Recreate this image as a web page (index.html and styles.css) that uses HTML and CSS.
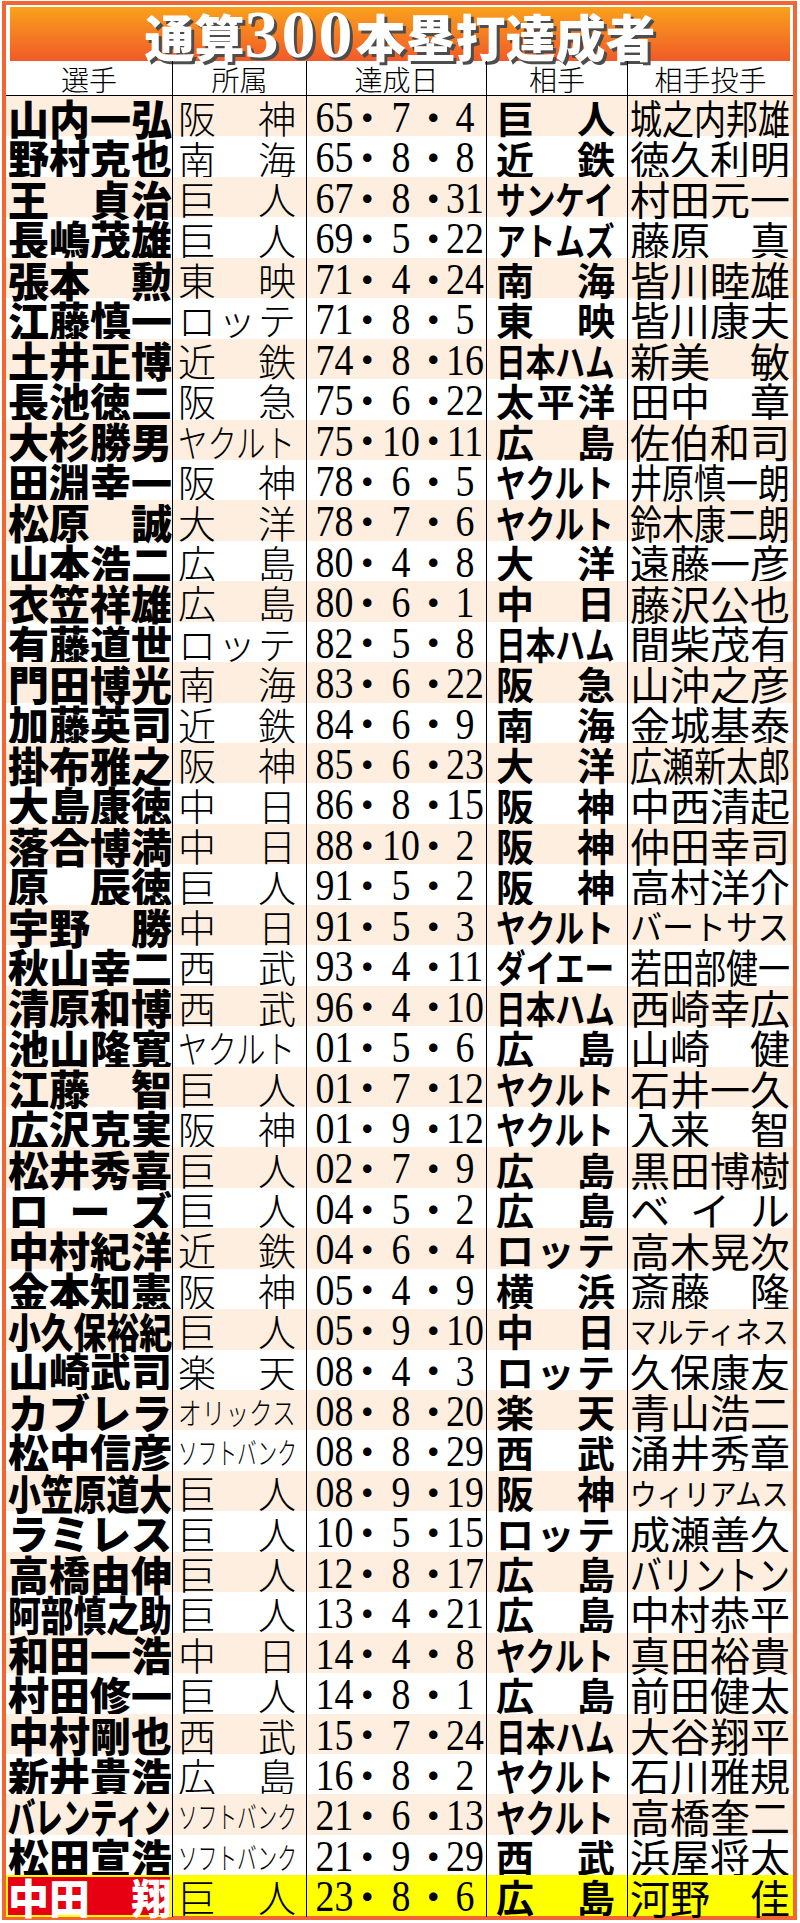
FILE: index.html
```html
<!DOCTYPE html>
<html lang="ja">
<head>
<meta charset="utf-8">
<title>通算300本塁打達成者</title>
<link rel="stylesheet" href="styles.css">
</head>
<body>
<div class="frame">
  <div class="title"><h1>通算<span class="num">300</span>本塁打達成者</h1></div>
  <div class="hd">
    <div>選手</div><div>所属</div><div>達成日</div><div>相手</div><div>相手投手</div>
  </div>
  <div class="rows">
    <div class="r"><div class="c nm"><b>山内一弘</b></div><div class="c tm"><b>阪</b><b>神</b></div><div class="c dt"><i>65</i><i>・</i><i>7</i><i>・</i><i>4</i></div><div class="c op"><b>巨</b><b>人</b></div><div class="c pt"><b class="s5">城之内邦雄</b></div></div>
    <div class="r"><div class="c nm"><b>野村克也</b></div><div class="c tm"><b>南</b><b>海</b></div><div class="c dt"><i>65</i><i>・</i><i>8</i><i>・</i><i>8</i></div><div class="c op"><b>近</b><b>鉄</b></div><div class="c pt"><b>徳久利明</b></div></div>
    <div class="r"><div class="c nm"><b>王</b><b>貞治</b></div><div class="c tm"><b>巨</b><b>人</b></div><div class="c dt"><i>67</i><i>・</i><i>8</i><i>・</i><i>31</i></div><div class="c op"><b class="s4">サンケイ</b></div><div class="c pt"><b>村田元一</b></div></div>
    <div class="r"><div class="c nm"><b>長嶋茂雄</b></div><div class="c tm"><b>巨</b><b>人</b></div><div class="c dt"><i>69</i><i>・</i><i>5</i><i>・</i><i>22</i></div><div class="c op"><b class="s4">アトムズ</b></div><div class="c pt"><b>藤原</b><b>真</b></div></div>
    <div class="r"><div class="c nm"><b>張本</b><b>勲</b></div><div class="c tm"><b>東</b><b>映</b></div><div class="c dt"><i>71</i><i>・</i><i>4</i><i>・</i><i>24</i></div><div class="c op"><b>南</b><b>海</b></div><div class="c pt"><b>皆川睦雄</b></div></div>
    <div class="r"><div class="c nm"><b>江藤慎一</b></div><div class="c tm"><b>ロ</b><b>ッ</b><b>テ</b></div><div class="c dt"><i>71</i><i>・</i><i>8</i><i>・</i><i>5</i></div><div class="c op"><b>東</b><b>映</b></div><div class="c pt"><b>皆川康夫</b></div></div>
    <div class="r"><div class="c nm"><b>土井正博</b></div><div class="c tm"><b>近</b><b>鉄</b></div><div class="c dt"><i>74</i><i>・</i><i>8</i><i>・</i><i>16</i></div><div class="c op"><b class="s4">日本ハム</b></div><div class="c pt"><b>新美</b><b>敏</b></div></div>
    <div class="r"><div class="c nm"><b>長池徳二</b></div><div class="c tm"><b>阪</b><b>急</b></div><div class="c dt"><i>75</i><i>・</i><i>6</i><i>・</i><i>22</i></div><div class="c op"><b>太</b><b>平</b><b>洋</b></div><div class="c pt"><b>田中</b><b>章</b></div></div>
    <div class="r"><div class="c nm"><b>大杉勝男</b></div><div class="c tm"><b class="s4">ヤクルト</b></div><div class="c dt"><i>75</i><i>・</i><i>10</i><i>・</i><i>11</i></div><div class="c op"><b>広</b><b>島</b></div><div class="c pt"><b>佐伯和司</b></div></div>
    <div class="r"><div class="c nm"><b>田淵幸一</b></div><div class="c tm"><b>阪</b><b>神</b></div><div class="c dt"><i>78</i><i>・</i><i>6</i><i>・</i><i>5</i></div><div class="c op"><b class="s4">ヤクルト</b></div><div class="c pt"><b class="s5">井原慎一朗</b></div></div>
    <div class="r"><div class="c nm"><b>松原</b><b>誠</b></div><div class="c tm"><b>大</b><b>洋</b></div><div class="c dt"><i>78</i><i>・</i><i>7</i><i>・</i><i>6</i></div><div class="c op"><b class="s4">ヤクルト</b></div><div class="c pt"><b class="s5">鈴木康二朗</b></div></div>
    <div class="r"><div class="c nm"><b>山本浩二</b></div><div class="c tm"><b>広</b><b>島</b></div><div class="c dt"><i>80</i><i>・</i><i>4</i><i>・</i><i>8</i></div><div class="c op"><b>大</b><b>洋</b></div><div class="c pt"><b>遠藤一彦</b></div></div>
    <div class="r"><div class="c nm"><b>衣笠祥雄</b></div><div class="c tm"><b>広</b><b>島</b></div><div class="c dt"><i>80</i><i>・</i><i>6</i><i>・</i><i>1</i></div><div class="c op"><b>中</b><b>日</b></div><div class="c pt"><b>藤沢公也</b></div></div>
    <div class="r"><div class="c nm"><b>有藤道世</b></div><div class="c tm"><b>ロ</b><b>ッ</b><b>テ</b></div><div class="c dt"><i>82</i><i>・</i><i>5</i><i>・</i><i>8</i></div><div class="c op"><b class="s4">日本ハム</b></div><div class="c pt"><b>間柴茂有</b></div></div>
    <div class="r"><div class="c nm"><b>門田博光</b></div><div class="c tm"><b>南</b><b>海</b></div><div class="c dt"><i>83</i><i>・</i><i>6</i><i>・</i><i>22</i></div><div class="c op"><b>阪</b><b>急</b></div><div class="c pt"><b>山沖之彦</b></div></div>
    <div class="r"><div class="c nm"><b>加藤英司</b></div><div class="c tm"><b>近</b><b>鉄</b></div><div class="c dt"><i>84</i><i>・</i><i>6</i><i>・</i><i>9</i></div><div class="c op"><b>南</b><b>海</b></div><div class="c pt"><b>金城基泰</b></div></div>
    <div class="r"><div class="c nm"><b>掛布雅之</b></div><div class="c tm"><b>阪</b><b>神</b></div><div class="c dt"><i>85</i><i>・</i><i>6</i><i>・</i><i>23</i></div><div class="c op"><b>大</b><b>洋</b></div><div class="c pt"><b class="s5">広瀬新太郎</b></div></div>
    <div class="r"><div class="c nm"><b>大島康徳</b></div><div class="c tm"><b>中</b><b>日</b></div><div class="c dt"><i>86</i><i>・</i><i>8</i><i>・</i><i>15</i></div><div class="c op"><b>阪</b><b>神</b></div><div class="c pt"><b>中西清起</b></div></div>
    <div class="r"><div class="c nm"><b>落合博満</b></div><div class="c tm"><b>中</b><b>日</b></div><div class="c dt"><i>88</i><i>・</i><i>10</i><i>・</i><i>2</i></div><div class="c op"><b>阪</b><b>神</b></div><div class="c pt"><b>仲田幸司</b></div></div>
    <div class="r"><div class="c nm"><b>原</b><b>辰徳</b></div><div class="c tm"><b>巨</b><b>人</b></div><div class="c dt"><i>91</i><i>・</i><i>5</i><i>・</i><i>2</i></div><div class="c op"><b>阪</b><b>神</b></div><div class="c pt"><b>高村洋介</b></div></div>
    <div class="r"><div class="c nm"><b>宇野</b><b>勝</b></div><div class="c tm"><b>中</b><b>日</b></div><div class="c dt"><i>91</i><i>・</i><i>5</i><i>・</i><i>3</i></div><div class="c op"><b class="s4">ヤクルト</b></div><div class="c pt"><b class="k5">バートサス</b></div></div>
    <div class="r"><div class="c nm"><b>秋山幸二</b></div><div class="c tm"><b>西</b><b>武</b></div><div class="c dt"><i>93</i><i>・</i><i>4</i><i>・</i><i>11</i></div><div class="c op"><b class="s4">ダイエー</b></div><div class="c pt"><b class="s5">若田部健一</b></div></div>
    <div class="r"><div class="c nm"><b>清原和博</b></div><div class="c tm"><b>西</b><b>武</b></div><div class="c dt"><i>96</i><i>・</i><i>4</i><i>・</i><i>10</i></div><div class="c op"><b class="s4">日本ハム</b></div><div class="c pt"><b>西崎幸広</b></div></div>
    <div class="r"><div class="c nm"><b>池山隆寛</b></div><div class="c tm"><b class="s4">ヤクルト</b></div><div class="c dt"><i>01</i><i>・</i><i>5</i><i>・</i><i>6</i></div><div class="c op"><b>広</b><b>島</b></div><div class="c pt"><b>山崎</b><b>健</b></div></div>
    <div class="r"><div class="c nm"><b>江藤</b><b>智</b></div><div class="c tm"><b>巨</b><b>人</b></div><div class="c dt"><i>01</i><i>・</i><i>7</i><i>・</i><i>12</i></div><div class="c op"><b class="s4">ヤクルト</b></div><div class="c pt"><b>石井一久</b></div></div>
    <div class="r"><div class="c nm"><b>広沢克実</b></div><div class="c tm"><b>阪</b><b>神</b></div><div class="c dt"><i>01</i><i>・</i><i>9</i><i>・</i><i>12</i></div><div class="c op"><b class="s4">ヤクルト</b></div><div class="c pt"><b>入来</b><b>智</b></div></div>
    <div class="r"><div class="c nm"><b>松井秀喜</b></div><div class="c tm"><b>巨</b><b>人</b></div><div class="c dt"><i>02</i><i>・</i><i>7</i><i>・</i><i>9</i></div><div class="c op"><b>広</b><b>島</b></div><div class="c pt"><b>黒田博樹</b></div></div>
    <div class="r"><div class="c nm"><b>ロ</b><b>ー</b><b>ズ</b></div><div class="c tm"><b>巨</b><b>人</b></div><div class="c dt"><i>04</i><i>・</i><i>5</i><i>・</i><i>2</i></div><div class="c op"><b>広</b><b>島</b></div><div class="c pt"><b>ベ</b><b>イ</b><b>ル</b></div></div>
    <div class="r"><div class="c nm"><b>中村紀洋</b></div><div class="c tm"><b>近</b><b>鉄</b></div><div class="c dt"><i>04</i><i>・</i><i>6</i><i>・</i><i>4</i></div><div class="c op"><b>ロ</b><b>ッ</b><b>テ</b></div><div class="c pt"><b>高木晃次</b></div></div>
    <div class="r"><div class="c nm"><b>金本知憲</b></div><div class="c tm"><b>阪</b><b>神</b></div><div class="c dt"><i>05</i><i>・</i><i>4</i><i>・</i><i>9</i></div><div class="c op"><b>横</b><b>浜</b></div><div class="c pt"><b>斎藤</b><b>隆</b></div></div>
    <div class="r"><div class="c nm"><b class="s5">小久保裕紀</b></div><div class="c tm"><b>巨</b><b>人</b></div><div class="c dt"><i>05</i><i>・</i><i>9</i><i>・</i><i>10</i></div><div class="c op"><b>中</b><b>日</b></div><div class="c pt"><b class="k6">マルティネス</b></div></div>
    <div class="r"><div class="c nm"><b>山崎武司</b></div><div class="c tm"><b>楽</b><b>天</b></div><div class="c dt"><i>08</i><i>・</i><i>4</i><i>・</i><i>3</i></div><div class="c op"><b>ロ</b><b>ッ</b><b>テ</b></div><div class="c pt"><b>久保康友</b></div></div>
    <div class="r"><div class="c nm"><b>カブレラ</b></div><div class="c tm"><b class="k5">オリックス</b></div><div class="c dt"><i>08</i><i>・</i><i>8</i><i>・</i><i>20</i></div><div class="c op"><b>楽</b><b>天</b></div><div class="c pt"><b>青山浩二</b></div></div>
    <div class="r"><div class="c nm"><b>松中信彦</b></div><div class="c tm"><b class="k6">ソフトバンク</b></div><div class="c dt"><i>08</i><i>・</i><i>8</i><i>・</i><i>29</i></div><div class="c op"><b>西</b><b>武</b></div><div class="c pt"><b>涌井秀章</b></div></div>
    <div class="r"><div class="c nm"><b class="s5">小笠原道大</b></div><div class="c tm"><b>巨</b><b>人</b></div><div class="c dt"><i>08</i><i>・</i><i>9</i><i>・</i><i>19</i></div><div class="c op"><b>阪</b><b>神</b></div><div class="c pt"><b class="k6">ウィリアムス</b></div></div>
    <div class="r"><div class="c nm"><b>ラミレス</b></div><div class="c tm"><b>巨</b><b>人</b></div><div class="c dt"><i>10</i><i>・</i><i>5</i><i>・</i><i>15</i></div><div class="c op"><b>ロ</b><b>ッ</b><b>テ</b></div><div class="c pt"><b>成瀬善久</b></div></div>
    <div class="r"><div class="c nm"><b>高橋由伸</b></div><div class="c tm"><b>巨</b><b>人</b></div><div class="c dt"><i>12</i><i>・</i><i>8</i><i>・</i><i>17</i></div><div class="c op"><b>広</b><b>島</b></div><div class="c pt"><b class="s5">バリントン</b></div></div>
    <div class="r"><div class="c nm"><b class="s5">阿部慎之助</b></div><div class="c tm"><b>巨</b><b>人</b></div><div class="c dt"><i>13</i><i>・</i><i>4</i><i>・</i><i>21</i></div><div class="c op"><b>広</b><b>島</b></div><div class="c pt"><b>中村恭平</b></div></div>
    <div class="r"><div class="c nm"><b>和田一浩</b></div><div class="c tm"><b>中</b><b>日</b></div><div class="c dt"><i>14</i><i>・</i><i>4</i><i>・</i><i>8</i></div><div class="c op"><b class="s4">ヤクルト</b></div><div class="c pt"><b>真田裕貴</b></div></div>
    <div class="r"><div class="c nm"><b>村田修一</b></div><div class="c tm"><b>巨</b><b>人</b></div><div class="c dt"><i>14</i><i>・</i><i>8</i><i>・</i><i>1</i></div><div class="c op"><b>広</b><b>島</b></div><div class="c pt"><b>前田健太</b></div></div>
    <div class="r"><div class="c nm"><b>中村剛也</b></div><div class="c tm"><b>西</b><b>武</b></div><div class="c dt"><i>15</i><i>・</i><i>7</i><i>・</i><i>24</i></div><div class="c op"><b class="s4">日本ハム</b></div><div class="c pt"><b>大谷翔平</b></div></div>
    <div class="r"><div class="c nm"><b>新井貴浩</b></div><div class="c tm"><b>広</b><b>島</b></div><div class="c dt"><i>16</i><i>・</i><i>8</i><i>・</i><i>2</i></div><div class="c op"><b class="s4">ヤクルト</b></div><div class="c pt"><b>石川雅規</b></div></div>
    <div class="r"><div class="c nm"><b class="s6">バレンティン</b></div><div class="c tm"><b class="k6">ソフトバンク</b></div><div class="c dt"><i>21</i><i>・</i><i>6</i><i>・</i><i>13</i></div><div class="c op"><b class="s4">ヤクルト</b></div><div class="c pt"><b>高橋奎二</b></div></div>
    <div class="r"><div class="c nm"><b>松田宣浩</b></div><div class="c tm"><b class="k6">ソフトバンク</b></div><div class="c dt"><i>21</i><i>・</i><i>9</i><i>・</i><i>29</i></div><div class="c op"><b>西</b><b>武</b></div><div class="c pt"><b>浜屋将太</b></div></div>
    <div class="r last"><div class="c nm"><b>中田</b><b>翔</b></div><div class="c tm"><b>巨</b><b>人</b></div><div class="c dt"><i>23</i><i>・</i><i>8</i><i>・</i><i>6</i></div><div class="c op"><b>広</b><b>島</b></div><div class="c pt"><b>河野</b><b>佳</b></div></div>
  </div>
</div>
</body>
</html>
```

FILE: styles.css
```css
* {
  box-sizing: border-box;
  margin: 0;
  padding: 0;
}

html, body {
  background: #ffffff;
}

body {
  width: 800px;
  height: 1923px;
  overflow: hidden;
  font-family: "Noto Sans CJK JP", sans-serif;
  color: #000;
}

.frame {
  margin: 1px 3px 3px 2px;
  border: 4px solid #f26633;
  background: #ffffff;
}

.title {
  margin: 2px 3px 0 4px;
  height: 54px;
  background: linear-gradient(#f9a11b, #f15a29);
  display: flex;
  align-items: center;
  justify-content: center;
}

.title h1 {
  font-family: "Noto Sans CJK JP", sans-serif;
  font-weight: 900;
  font-size: 50px;
  line-height: 48px;
  height: 48px;
  color: #ffffff;
  text-shadow: 3px 3px 0 #4d4d4d;
  white-space: nowrap;
}

.title .num {
  font-family: "Liberation Serif", serif;
  font-weight: 700;
  font-size: 68px;
  line-height: 48px;
  letter-spacing: 3px;
}

.hd,
.r {
  display: grid;
  grid-template-columns: 166px 134px 180px 141px 166px;
}

.hd {
  height: 35px;
  border-bottom: 1px solid #000;
}

.hd > div {
  display: flex;
  align-items: center;
  justify-content: center;
  font-weight: 300;
  font-size: 28px;
  line-height: 1;
  padding-top: 2px;
}

.hd > div + div,
.r > div + div {
  border-left: 1px solid #000;
}

.rows {
  height: 1820px;
  display: flex;
  flex-direction: column;
}

.r {
  flex: 1 1 0;
  min-height: 0;
}

.r:nth-child(odd) {
  background: #fdeedf;
}

.c {
  display: flex;
  align-items: center;
  justify-content: space-between;
  white-space: nowrap;
  line-height: 0.9;
  min-width: 0;
}

.c b,
.c i {
  font-weight: inherit;
  font-style: normal;
  flex-shrink: 0;
  white-space: nowrap;
}

/* 選手 */
.nm {
  padding: 1px 0 0 2px;
  font-weight: 900;
  font-size: 41px;
}

.nm .s5 {
  transform: scaleX(0.8);
  transform-origin: left center;
}

.nm .s6 {
  transform: scaleX(0.667);
  transform-origin: left center;
}

/* 所属 */
.tm {
  padding: 1px 10px 0 5px;
  font-weight: 300;
  font-size: 38px;
}

.tm .s4 {
  transform: scaleX(0.776);
  transform-origin: left center;
}

.tm .k5 {
  font-size: 30px;
  transform: scaleX(0.79);
  transform-origin: left center;
}

.tm .k6 {
  font-size: 30px;
  transform: scaleX(0.655);
  transform-origin: left center;
}

/* 達成日 */
.dt {
  display: grid;
  grid-template-columns: 43px 18px 44px 17px 42px;
  align-items: center;
  padding: 2px 0 0 6px;
  font-family: "Liberation Serif", "Noto Sans CJK JP", serif;
  font-size: 44px;
}

.dt i {
  display: flex;
  justify-content: center;
  transform: scaleX(0.86);
}

.dt i:nth-child(even) {
  font-family: "Noto Sans CJK JP", sans-serif;
  font-size: 40px;
  transform: translateY(-2px);
}

/* 相手 */
.op {
  padding: 1px 12px 0 9px;
  font-weight: 700;
  font-size: 38px;
}

.op .s4 {
  transform: scaleX(0.78);
  transform-origin: left center;
}

/* 相手投手 */
.pt {
  padding: 1px 3px 0 2px;
  font-weight: 400;
  font-size: 40px;
}

.pt .s5 {
  transform: scaleX(0.8);
  transform-origin: left center;
}

.pt .k5 {
  font-size: 34px;
  transform: scaleX(0.94);
  transform-origin: left center;
}

.pt .k6 {
  font-size: 30px;
  transform: scaleX(0.89);
  transform-origin: left center;
}

/* 最新達成者 */
.r.last {
  background: #ffff00;
}

.r.last .nm {
  background: #e60012;
  color: #ffffff;
  box-shadow: inset 0 0 0 2px #ffff00;
}
```
